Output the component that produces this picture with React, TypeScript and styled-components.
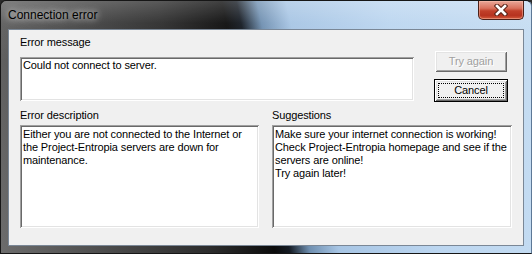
import React from "react";
import styled, { createGlobalStyle } from "styled-components";

const Global = createGlobalStyle`
  html, body { margin: 0; padding: 0; background: #2b2b2b; }
  body { width: 532px; height: 254px; overflow: hidden; }
`;

const Window = styled.div`
  box-sizing: border-box;
  width: 532px;
  height: 254px;
  display: flex;
  flex-direction: column;
  border-radius: 6px 6px 0 0;
  border: 1px solid #161616;
  border-right-color: #5d7896;
  padding-bottom: 7px;
  background:
    linear-gradient(180deg, rgba(255, 255, 255, 0.22) 0px, rgba(255, 255, 255, 0.05) 22px, rgba(255, 255, 255, 0) 60px),
    linear-gradient(78deg, #6c6c6c 0%, #4c4c4c 18%, #2c2c2c 36%, #0c0c0c 47%, #141a22 49.5%, #6f8fb0 53%, #a7c5e4 58%, #bcd6f0 75%, #c6ddf2 100%);
`;

const TitleBar = styled.div`
  height: 28px;
  display: flex;
  align-items: flex-start;
  justify-content: space-between;
  padding: 0 7px 0 7px;
`;

const Title = styled.div`
  margin-top: 7px;
  font-family: "Liberation Sans", Arial, sans-serif;
  font-size: 12px;
  line-height: 15px;
  color: #000;
  text-shadow: 0 0 6px rgba(255, 255, 255, 0.9), 0 0 12px rgba(255, 255, 255, 0.6);
`;

const CloseButton = styled.div`
  box-sizing: border-box;
  width: 46px;
  height: 19px;
  border: 1px solid #4b2018;
  border-top: none;
  border-radius: 0 0 5px 5px;
  background: linear-gradient(180deg, #e9a899 0%, #d9725d 40%, #c1402a 55%, #b7331f 80%, #d25a3c 100%);
  box-shadow: inset 0 0 0 1px rgba(255, 200, 180, 0.45);
  display: flex;
  align-items: center;
  justify-content: center;
`;

const Client = styled.div`
  box-sizing: border-box;
  margin: 0 7px;
  flex: 1;
  background: #f0f0f0;
  border: 1px solid #7a8796;
  padding: 6px 11px 0 11px;
  display: flex;
  flex-direction: column;
  font-family: "Liberation Sans", Arial, sans-serif;
  font-size: 11px;
  line-height: 13px;
  letter-spacing: -0.12px;
  color: #000;
`;

const Row = styled.div<{ $gap: number; $top?: number }>`
  display: flex;
  align-items: flex-start;
  gap: ${(p) => p.$gap}px;
  margin-top: ${(p) => p.$top ?? 0}px;
`;

const Field = styled.div<{ $width: number }>`
  width: ${(p) => p.$width}px;
  display: flex;
  flex-direction: column;
`;

const Label = styled.div<{ $space: number }>`
  margin-bottom: ${(p) => p.$space}px;
  white-space: nowrap;
`;

const TextBox = styled.div<{ $height: number; $padTop: number }>`
  box-sizing: border-box;
  height: ${(p) => p.$height}px;
  background: #fff;
  padding: ${(p) => p.$padTop}px 3px 0 3px;
  box-shadow:
    inset 1px 1px #a0a0a0,
    inset -1px -1px #ffffff,
    inset 2px 2px #696969,
    inset -2px -2px #e3e3e3;
  white-space: pre;
  overflow: hidden;
`;

const ButtonColumn = styled.div`
  margin-top: 14px;
  display: flex;
  flex-direction: column;
  gap: 6px;
`;

const Button = styled.div<{ $disabled?: boolean; $default?: boolean }>`
  box-sizing: border-box;
  width: 74px;
  height: 23px;
  background: #f0f0f0;
  display: flex;
  align-items: center;
  justify-content: center;
  position: relative;
  border: 1px solid ${(p) => (p.$default ? "#000" : "transparent")};
  box-shadow:
    inset 1px 1px #ffffff,
    inset -1px -1px #696969,
    inset 2px 2px #e3e3e3,
    inset -2px -2px #a0a0a0;
  color: ${(p) => (p.$disabled ? "#a0a0a0" : "#000")};
  text-shadow: ${(p) => (p.$disabled ? "1px 1px #ffffff" : "none")};
`;

const FocusRing = styled.span`
  position: absolute;
  inset: 3px;
  border: 1px dotted #000;
`;

export default function App() {
  return (
    <>
      <Global />
      <Window>
        <TitleBar>
          <Title>Connection error</Title>
          <CloseButton>
            <svg width="14" height="12" viewBox="0 0 14 12">
              <path d="M3 2 L11 10 M11 2 L3 10" stroke="#5a2418" strokeWidth="4.6" strokeLinecap="square" />
              <path d="M3 2 L11 10 M11 2 L3 10" stroke="#ffffff" strokeWidth="2.6" strokeLinecap="square" />
            </svg>
          </CloseButton>
        </TitleBar>
        <Client>
          <Row $gap={20}>
            <Field $width={394}>
              <Label $space={8}>Error message</Label>
              <TextBox $height={44} $padTop={2}>Could not connect to server.</TextBox>
            </Field>
            <ButtonColumn>
              <Button $disabled>Try again</Button>
              <Button $default>
                <FocusRing />
                Cancel
              </Button>
            </ButtonColumn>
          </Row>
          <Row $gap={13} $top={7}>
            <Field $width={239}>
              <Label $space={3}>Error description</Label>
              <TextBox $height={103} $padTop={3}>
                {"Either you are not connected to the Internet or\nthe Project-Entropia servers are down for\nmaintenance."}
              </TextBox>
            </Field>
            <Field $width={240}>
              <Label $space={3}>Suggestions</Label>
              <TextBox $height={103} $padTop={3}>
                {"Make sure your internet connection is working!\nCheck Project-Entropia homepage and see if the\nservers are online!\nTry again later!"}
              </TextBox>
            </Field>
          </Row>
        </Client>
      </Window>
    </>
  );
}
